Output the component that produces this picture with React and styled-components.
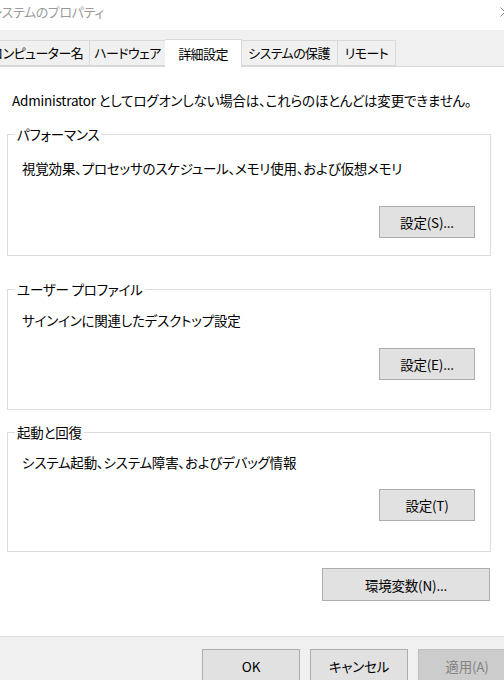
import React from "react";
import styled, { createGlobalStyle } from "styled-components";

const GlobalStyle = createGlobalStyle`
  html, body {
    margin: 0;
    padding: 0;
    background: #ffffff;
  }
  body {
    font-family: "Noto Sans CJK JP", "Noto Sans", sans-serif;
    font-feature-settings: "palt";
    color: #000000;
  }
`;

const groups = [
  {
    title: "パフォーマンス",
    text: "視覚効果、プロセッサのスケジュール、メモリ使用、および仮想メモリ",
    button: "設定(S)...",
    gap: 14,
    descGap: 14,
    buttonGap: 28,
    bottom: 17,
  },
  {
    title: "ユーザー プロファイル",
    text: "サインインに関連したデスクトップ設定",
    button: "設定(E)...",
    gap: 23,
    descGap: 11,
    buttonGap: 18,
    bottom: 29,
  },
  {
    title: "起動と回復",
    text: "システム起動、システム障害、およびデバッグ情報",
    button: "設定(T)",
    gap: 12,
    descGap: 10,
    buttonGap: 17,
    bottom: 30,
  },
];

const tabs = [
  { label: "コンピューター名", width: 106 },
  { label: "ハードウェア", width: 76 },
  { label: "詳細設定", width: 77 },
  { label: "システムの保護", width: 97 },
  { label: "リモート", width: 58 },
];

function GroupBox({ group }) {
  return (
    <StyledGroup $gap={group.gap} $bottom={group.bottom}>
      <StyledLegend>{group.title}</StyledLegend>
      <StyledDesc $gap={group.descGap}>{group.text}</StyledDesc>
      <StyledButtonRow $gap={group.buttonGap}>
        <StyledButton $width={96}>{group.button}</StyledButton>
      </StyledButtonRow>
    </StyledGroup>
  );
}

function App() {
  return (
    <StyledWindow>
      <GlobalStyle />
      <StyledTitleBar>
        <span className="title">システムのプロパティ</span>
        <svg width="10" height="10" viewBox="0 0 10 10" className="close">
          <path d="M0.5 0.5 L9.5 9.5 M9.5 0.5 L0.5 9.5" stroke="#8a8a8a" strokeWidth="1" fill="none" />
        </svg>
      </StyledTitleBar>

      <StyledTabStrip>
        {tabs.map((t, i) => (
          <StyledTab key={t.label} $active={i === 2} $width={t.width}>
            {t.label}
          </StyledTab>
        ))}
      </StyledTabStrip>

      <StyledPanel>
        <StyledNote>
          Administrator としてログオンしない場合は、これらのほとんどは変更できません。
        </StyledNote>
        {groups.map((g) => (
          <GroupBox key={g.title} group={g} />
        ))}
        <StyledEnvRow>
          <StyledButton $width={168}>環境変数(N)...</StyledButton>
        </StyledEnvRow>
      </StyledPanel>

      <StyledFooter>
        <StyledButton $width={98}>OK</StyledButton>
        <StyledButton $width={98}>キャンセル</StyledButton>
        <StyledButton $width={98} $disabled>
          適用(A)
        </StyledButton>
      </StyledFooter>
    </StyledWindow>
  );
}

export default App;

const StyledWindow = styled.div`
  width: 504px;
  height: 680px;
  overflow: hidden;
  display: flex;
  flex-direction: column;
  background: #f0f0f0;
  font-size: 13.5px;
  letter-spacing: -0.2px;
`;

const StyledTitleBar = styled.div`
  height: 30px;
  flex: none;
  background: #ffffff;
  display: flex;
  align-items: center;
  justify-content: space-between;
  overflow: hidden;

  & .title {
    margin-left: -10px;
    margin-top: -6px;
    color: #9a9a9a;
    font-size: 13px;
    letter-spacing: -0.4px;
    line-height: 20px;
    white-space: nowrap;
  }

  & .close {
    margin-right: -6px;
    margin-top: -6px;
  }
`;

const StyledTabStrip = styled.div`
  height: 37px;
  flex: none;
  display: flex;
  align-items: flex-end;
  margin-left: -16px;
  border-bottom: 1px solid #d9d9d9;
  box-sizing: border-box;
`;

const StyledTab = styled.div`
  width: ${({ $width }) => $width}px;
  height: ${({ $active }) => ($active ? "28px" : "26px")};
  margin-bottom: ${({ $active }) => ($active ? "-1px" : "0")};
  margin-left: ${({ $active }) => ($active ? "-1px" : "0")};
  margin-right: ${({ $active }) => ($active ? "-1px" : "0")};
  box-sizing: border-box;
  display: flex;
  align-items: center;
  justify-content: center;
  overflow: hidden;
  white-space: nowrap;
  font-size: 13px;
  letter-spacing: -0.6px;
  line-height: 20px;
  background: ${({ $active }) => ($active ? "#ffffff" : "#f0f0f0")};
  border: 1px solid #d9d9d9;
  border-bottom: ${({ $active }) => ($active ? "none" : "1px solid #d9d9d9")};
  position: ${({ $active }) => ($active ? "relative" : "static")};
  z-index: ${({ $active }) => ($active ? 1 : 0)};

  & + & {
    border-left: ${({ $active }) => ($active ? "1px solid #d9d9d9" : "none")};
  }
`;

const StyledPanel = styled.div`
  height: 569px;
  flex: none;
  box-sizing: border-box;
  background: #ffffff;
  padding: 23px 0 0;
`;

const StyledNote = styled.p`
  margin: 0 0 0 12px;
  line-height: 20px;
  white-space: nowrap;
`;

const StyledGroup = styled.fieldset`
  margin: ${({ $gap }) => $gap}px 13px 0 7px;
  padding: 0 15px ${({ $bottom }) => $bottom}px 14px;
  border: 1px solid #dcdcdc;
  min-width: 0;
`;

const StyledLegend = styled.legend`
  margin-left: -7px;
  padding: 0 2px;
  line-height: 20px;
  white-space: nowrap;
`;

const StyledDesc = styled.p`
  margin: ${({ $gap }) => $gap}px 0 0;
  line-height: 20px;
  white-space: nowrap;
`;

const StyledButtonRow = styled.div`
  margin-top: ${({ $gap }) => $gap}px;
  display: flex;
  justify-content: flex-end;
`;

const StyledButton = styled.button`
  width: ${({ $width }) => $width}px;
  height: 32px;
  flex: none;
  box-sizing: border-box;
  padding: 0;
  font-family: inherit;
  font-feature-settings: "palt";
  font-size: 13.5px;
  letter-spacing: -0.2px;
  color: ${({ $disabled }) => ($disabled ? "#838383" : "#000000")};
  background: ${({ $disabled }) => ($disabled ? "#cccccc" : "#e1e1e1")};
  border: 1px solid ${({ $disabled }) => ($disabled ? "#bfbfbf" : "#adadad")};
  border-radius: 0;
`;

const StyledEnvRow = styled.div`
  margin: 16px 14px 0 0;
  display: flex;
  justify-content: flex-end;

  & ${StyledButton} {
    height: 33px;
  }
`;

const StyledFooter = styled.div`
  flex: 1;
  border-top: 1px solid #dfdfdf;
  display: flex;
  justify-content: flex-end;
  gap: 10px;
  padding-top: 12px;
  margin-right: -12px;

  & ${StyledButton} {
    height: 34px;
  }
`;
